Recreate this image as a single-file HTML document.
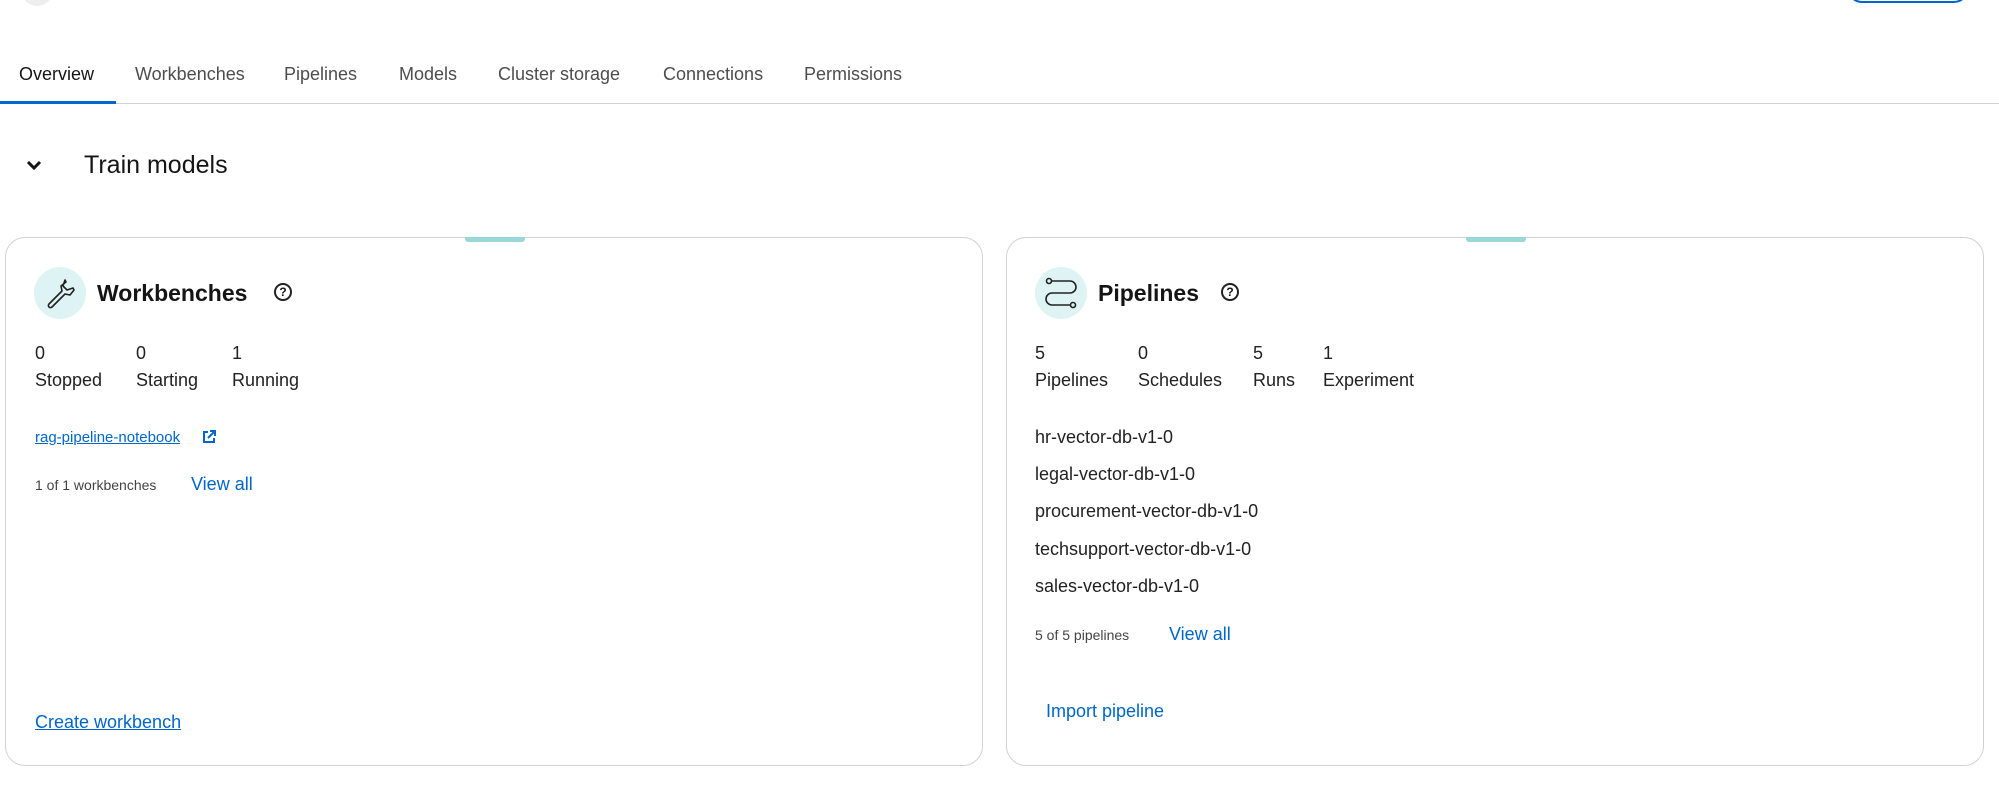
<!DOCTYPE html>
<html><head><style>
*{margin:0;padding:0;box-sizing:border-box}
body{width:1999px;height:798px;background:#fff;font-family:"Liberation Sans",sans-serif;color:#151515;position:relative;overflow:hidden}
.a{position:absolute;white-space:nowrap}
.tab{position:absolute;top:64px;font-size:18px;color:#4d4d4d}
.card{position:absolute;top:237px;height:529px;border:1px solid #d2d2d2;border-radius:20px;width:978px}
.teal{position:absolute;top:-1px;left:459px;width:60px;height:5px;background:#9ad8d8;border-radius:0 0 3px 3px}
.ic{position:absolute;left:28px;top:29px;width:52px;height:52px;border-radius:50%;background:#def3f3}
.ttl{position:absolute;left:91px;top:42px;font-size:23px;font-weight:bold}
.help{position:absolute;top:45px;width:18px;height:18px;border:2px solid #222;border-radius:50%;font-size:12px;font-weight:bold;text-align:center;line-height:14px}
.st{font-size:18px;color:#222}
.blue{color:#0066cc}
</style></head><body>
<div class="a" style="left:22px;top:-22px;width:30px;height:28px;border-radius:50%;background:#eee"></div>
<div class="a" style="left:1846px;top:-30px;width:124px;height:33px;border:2px solid #0066cc;border-radius:18px"></div>

<div class="tab" style="left:19px;color:#151515">Overview</div>
<div class="tab" style="left:135px">Workbenches</div>
<div class="tab" style="left:284px">Pipelines</div>
<div class="tab" style="left:399px">Models</div>
<div class="tab" style="left:498px">Cluster storage</div>
<div class="tab" style="left:663px">Connections</div>
<div class="tab" style="left:804px">Permissions</div>
<div class="a" style="left:0;top:103px;width:1999px;height:1px;background:#d2d2d2"></div>
<div class="a" style="left:0;top:101px;width:116px;height:3px;background:#0066cc"></div>

<svg class="a" style="left:26px;top:160px" width="16" height="12" viewBox="0 0 16 12"><path d="M2 2l6 6 6-6" fill="none" stroke="#151515" stroke-width="3"/></svg>
<div class="a" style="left:84px;top:151px;font-size:25px">Train models</div>

<div class="card" style="left:5px">
 <div class="teal"></div>
 <div class="ic"><svg width="52" height="52" viewBox="0 0 52 52"><path d="M31 13l-2 6 4 4 6-2 1 2-4 5-5-1-13 13a2 2 0 0 1-3-3l13-13-1-5 5-4z" fill="none" stroke="#222" stroke-width="1.6" stroke-linejoin="round"/></svg></div>
 <div class="ttl">Workbenches</div>
 <div class="help" style="left:268px">?</div>
 <div class="a st" style="left:29px;top:105px">0</div><div class="a st" style="left:29px;top:132px">Stopped</div>
 <div class="a st" style="left:130px;top:105px">0</div><div class="a st" style="left:130px;top:132px">Starting</div>
 <div class="a st" style="left:226px;top:105px">1</div><div class="a st" style="left:226px;top:132px">Running</div>
 <div class="a blue" style="left:29px;top:191px;font-size:15px;text-decoration:underline">rag-pipeline-notebook</div>
 <svg class="a" style="left:195px;top:191px" width="16" height="16" viewBox="0 0 16 16"><path d="M7 3H3v10h10V9M9 2h5v5M14 2L7 9" fill="none" stroke="#0066cc" stroke-width="2"/></svg>
 <div class="a" style="left:29px;top:239px;font-size:14px;color:#444">1 of 1 workbenches</div>
 <div class="a blue" style="left:185px;top:236px;font-size:18px">View all</div>
 <div class="a blue" style="left:29px;top:474px;font-size:18px;text-decoration:underline">Create workbench</div>
</div>

<div class="card" style="left:1006px">
 <div class="teal"></div>
 <div class="ic"><svg width="52" height="52" viewBox="0 0 52 52"><circle cx="14" cy="14" r="2.5" fill="none" stroke="#222" stroke-width="1.6"/><circle cx="38" cy="38" r="2.5" fill="none" stroke="#222" stroke-width="1.6"/><path d="M17 14h18a6 6 0 0 1 0 12H17a6 6 0 0 0 0 12h18" fill="none" stroke="#222" stroke-width="1.6"/></svg></div>
 <div class="ttl">Pipelines</div>
 <div class="help" style="left:214px">?</div>
 <div class="a st" style="left:28px;top:105px">5</div><div class="a st" style="left:28px;top:132px">Pipelines</div>
 <div class="a st" style="left:131px;top:105px">0</div><div class="a st" style="left:131px;top:132px">Schedules</div>
 <div class="a st" style="left:246px;top:105px">5</div><div class="a st" style="left:246px;top:132px">Runs</div>
 <div class="a st" style="left:316px;top:105px">1</div><div class="a st" style="left:316px;top:132px">Experiment</div>
 <div class="a st" style="left:28px;top:189px">hr-vector-db-v1-0</div>
 <div class="a st" style="left:28px;top:226px">legal-vector-db-v1-0</div>
 <div class="a st" style="left:28px;top:263px">procurement-vector-db-v1-0</div>
 <div class="a st" style="left:28px;top:301px">techsupport-vector-db-v1-0</div>
 <div class="a st" style="left:28px;top:338px">sales-vector-db-v1-0</div>
 <div class="a" style="left:28px;top:389px;font-size:14px;color:#444">5 of 5 pipelines</div>
 <div class="a blue" style="left:162px;top:386px;font-size:18px">View all</div>
 <div class="a blue" style="left:39px;top:463px;font-size:18px">Import pipeline</div>
</div>
</body></html>
